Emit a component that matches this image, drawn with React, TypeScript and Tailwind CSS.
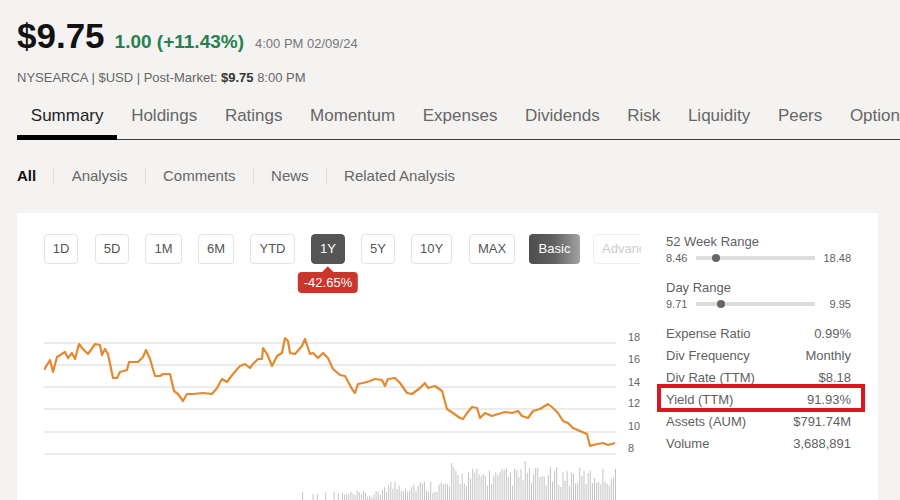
import React from "react";

const tabs = ["Summary", "Holdings", "Ratings", "Momentum", "Expenses", "Dividends", "Risk", "Liquidity", "Peers", "Options"];
const subTabs = ["All", "Analysis", "Comments", "News", "Related Analysis"];
const ranges = [
  { label: "1D", w: "w-[34px]" },
  { label: "5D", w: "w-[34px]" },
  { label: "1M", w: "w-[37px]" },
  { label: "6M", w: "w-[36px]" },
  { label: "YTD", w: "w-[45px]" },
  { label: "1Y", w: "w-[34px]" },
  { label: "5Y", w: "w-[34px]" },
  { label: "10Y", w: "w-[41px]" },
  { label: "MAX", w: "w-[46px]" },
];

const stats = [
  ["Expense Ratio", "0.99%"],
  ["Div Frequency", "Monthly"],
  ["Div Rate (TTM)", "$8.18"],
  ["Yield (TTM)", "91.93%"],
  ["Assets (AUM)", "$791.74M"],
  ["Volume", "3,688,891"],
];

// price line, traced in page coordinates (svg viewBox starts at 44,300)
const price = [
  [44, 369], [50, 359], [53, 371], [57, 356], [65, 351], [68, 357], [72, 352], [75, 358], [79, 343],
  [83, 348], [88, 353], [95, 343], [100, 344], [102, 354], [105, 348], [108, 353], [113, 377], [117, 377],
  [120, 371], [127, 369], [129, 361], [138, 361], [143, 356], [146, 349], [150, 358], [155, 375], [160, 375],
  [163, 373], [170, 373], [174, 390], [178, 393], [183, 400], [187, 393], [193, 393], [203, 392], [212, 393],
  [217, 387], [222, 378], [227, 381], [233, 373], [240, 365], [245, 363], [250, 367], [253, 363], [258, 358],
  [262, 358], [263, 347], [267, 353], [272, 365], [277, 355], [282, 352], [285, 337], [288, 340], [290, 352],
  [295, 353], [302, 345], [305, 338], [310, 353], [313, 352], [318, 357], [323, 352], [328, 357], [333, 368],
  [340, 374], [345, 375], [352, 388], [355, 392], [358, 383], [363, 382], [370, 380], [375, 378], [382, 379],
  [385, 385], [388, 378], [395, 377], [400, 382], [407, 392], [412, 393], [420, 387], [425, 382], [428, 387],
  [435, 385], [442, 390], [447, 408], [453, 412], [460, 417], [463, 418], [467, 412], [472, 406], [477, 407],
  [480, 417], [485, 412], [492, 415], [498, 413], [505, 411], [512, 412], [518, 410], [522, 415], [528, 417],
  [533, 410], [540, 408], [548, 403], [553, 407], [558, 412], [563, 420], [568, 422], [573, 427], [580, 430],
  [587, 433], [590, 445], [597, 443], [603, 442], [608, 444], [615, 442],
];

const gridYs = [342, 364, 386, 408, 431, 453];
const axis = [
  ["18", 340], ["16", 362], ["14", 385], ["12", 406], ["10", 429], ["8", 451],
];

const spikes: Record<number, number> = { 72: 38, 107: 40, 137: 28, 121: 30, 94: 26, 130: 27 };
const volume = Array.from({ length: 151 }, (_, i) => {
  const x = 300 + i * 2.1;
  const r = Math.abs(Math.sin(i * 12.9898) * 43758.5453) % 1;
  if (x < 340 && r < 0.6) return { x, h: 0 };
  const base = x < 380 ? 2 : x < 450 ? 8 : 14;
  const spread = x < 380 ? 8 : x < 450 ? 14 : 20;
  return { x, h: spikes[i] ?? base + r * spread };
});

const RangeRow = ({ lo, hi, cur }: { lo: number; hi: number; cur: number }) => {
  const pct = (cur - lo) / (hi - lo);
  return (
    <div className="flex items-center h-[14px] mt-px text-[11px]">
      <span className="w-[30px]">{lo.toFixed(2)}</span>
      <div className="relative w-[119px] h-[4px] bg-[#dddddd]">
        <div
          className="absolute top-1/2 -translate-y-1/2 w-[8px] h-[8px] rounded-full bg-[#666]"
          style={{ left: Math.round(pct * 119) + 1 }}
        ></div>
      </div>
      <span className="flex-1 text-right">{hi.toFixed(2)}</span>
    </div>
  );
};

const App = () => {
  return (
    <div className="w-[900px] h-[500px] overflow-hidden bg-[#f4f3f2] pl-[17px] font-['Liberation_Sans',Arial,sans-serif]">
      {/* Quote header */}
      <div className="flex items-baseline pt-[18px] h-[53px]">
        <span className="text-[35px] leading-[35px] font-bold text-[#111]">$9.75</span>
        <span className="ml-[10px] text-[19px] font-bold text-[#26804f]">1.00 (+11.43%)</span>
        <span className="ml-[11px] text-[13px] text-[#777]">4:00 PM 02/09/24</span>
      </div>
      <div className="mt-[17px] text-[13px] leading-4 text-[#666]">
        NYSEARCA | $USD | Post-Market: <span className="font-bold text-[#333]">$9.75</span> 8:00 PM
      </div>

      {/* Main tabs */}
      <div className="flex border-b border-[#3a3a3a] whitespace-nowrap">
        {tabs.map((t, i) => (
          <div
            key={t}
            className={`relative shrink-0 px-[13.8px] pt-[20px] pb-[13px] text-[17px] leading-5 ${
              i === 0 ? "text-[#222]" : "text-[#666]"
            }`}
          >
            {t}
            {i === 0 && <span className="absolute left-0 right-0 -bottom-px h-[5px] bg-black"></span>}
          </div>
        ))}
      </div>

      {/* Sub tabs */}
      <div className="flex items-center mt-[27px] text-[15px] leading-[18px]">
        {subTabs.map((t, i) => (
          <React.Fragment key={t}>
            {i > 0 && <span className="mx-[17.25px] w-px h-[14px] bg-[#dcdcdc]"></span>}
            <span className={i === 0 ? "font-bold text-[#111]" : "text-[#666]"}>{t}</span>
          </React.Fragment>
        ))}
      </div>

      {/* Chart card */}
      <div className="mt-[28px] mr-[22px] bg-white pl-[27px] pr-[27px] pt-[21px] pb-[20px] flex gap-[25px]">
        <div className="w-[597px] shrink-0 overflow-hidden">
          <div className="flex gap-4 whitespace-nowrap text-[13px]">
            {ranges.map((r) => (
              <div key={r.label} className={`relative shrink-0 ${r.label === "5D" || r.label === "MAX" ? "ml-px" : ""}`}>
                <div
                  className={`${r.w} h-[30px] flex items-center justify-center border rounded ${
                    r.label === "1Y" ? "bg-[#555] border-[#555] text-white" : "border-[#e2e2e2] text-[#555]"
                  }`}
                >
                  {r.label}
                </div>
                {r.label === "1Y" && (
                  <div className="absolute top-[38px] left-1/2 -translate-x-1/2 bg-[#c9372c] text-white px-[6px] h-[21px] flex items-center rounded-sm">
                    <span className="absolute -top-[4px] left-1/2 -translate-x-1/2 w-2 h-2 rotate-45 bg-[#c9372c]"></span>
                    <span className="relative">-42.65%</span>
                  </div>
                )}
              </div>
            ))}
            <div className="shrink-0 -ml-[2px] w-[51px] h-[30px] flex items-center justify-center rounded text-white bg-linear-to-r from-[#4e4e4e] via-[#626262] to-[#a3a3a3]">
              Basic
            </div>
            <div className="shrink-0 -ml-[3px] h-[30px] px-2 flex items-center rounded border border-[#eeeeee] text-[#cccccc]">
              Advanced
            </div>
          </div>

          <svg width="597" height="200" viewBox="44 300 597 200" className="block mt-[37px]">
            {gridYs.map((y) => (
              <line key={y} x1={44} x2={616} y1={y} y2={y} stroke="#e5e5e5" strokeWidth={1.5} />
            ))}
            {axis.map(([l, y]) => (
              <text key={l} x={628} y={y} fontSize={11} fill="#666" fontFamily="Liberation Sans, Arial, sans-serif">
                {l}
              </text>
            ))}
            {volume.map((v, i) =>
              v.h > 0 ? (
                <rect key={i} x={v.x} y={500 - v.h} width={1} height={v.h} fill="#c3c3c3" />
              ) : null
            )}
            <polyline
              points={price.map((p) => p.join(",")).join(" ")}
              fill="none"
              stroke="#e3892f"
              strokeWidth={2.2}
              strokeLinejoin="round"
            />
          </svg>
        </div>

        {/* Key stats */}
        <div className="w-[185px] shrink-0 text-[13px] text-[#5f5f5f]">
          <div className="leading-4">52 Week Range</div>
          <RangeRow lo={8.46} hi={18.48} cur={9.75} />
          <div className="mt-[15px] leading-4">Day Range</div>
          <RangeRow lo={9.71} hi={9.95} cur={9.75} />
          <div className="mt-[12px]">
            {stats.map(([k, v]) => (
              <div key={k} className="relative flex justify-between h-[22px] leading-[22px]">
                <span>{k}</span>
                <span>{v}</span>
                {k === "Yield (TTM)" && (
                  <span className="absolute -left-[9px] -right-[14px] -top-[5px] -bottom-px border-[4px] border-[#e0141e]"></span>
                )}
              </div>
            ))}
          </div>
        </div>
      </div>
    </div>
  );
};

export default App;
